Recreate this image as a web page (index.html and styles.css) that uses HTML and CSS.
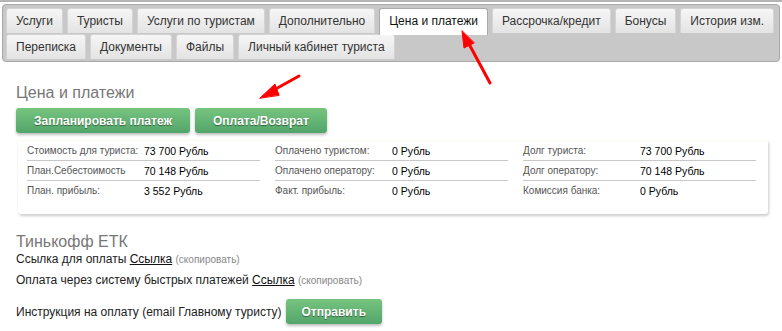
FILE: index.html
```html
<!DOCTYPE html>
<html lang="ru">
<head>
  <meta charset="UTF-8">
  <title>Цена и платежи</title>
  <link rel="stylesheet" href="styles.css">
</head>
<body>

<!-- вкладки заявки -->
<div class="tabs">
  <div class="tab-row">
    <a class="tab">Услуги</a>
    <a class="tab">Туристы</a>
    <a class="tab">Услуги по туристам</a>
    <a class="tab">Дополнительно</a>
    <a class="tab active">Цена и платежи</a>
    <a class="tab">Рассрочка/кредит</a>
    <a class="tab">Бонусы</a>
    <a class="tab">История изм.</a>
  </div>
  <div class="tab-row">
    <a class="tab">Переписка</a>
    <a class="tab">Документы</a>
    <a class="tab">Файлы</a>
    <a class="tab">Личный кабинет туриста</a>
  </div>
</div>

<div class="content">
  <h2>Цена и платежи</h2>
  <div class="btns">
    <button class="green">Запланировать платеж</button>
    <button class="green">Оплата/Возврат</button>
  </div>

  <div class="summary">
    <table>
      <tr><td class="lbl">Стоимость для туриста:</td><td>73 700 Рубль</td></tr>
      <tr><td class="lbl">План.Себестоимость</td><td>70 148 Рубль</td></tr>
      <tr><td class="lbl">План. прибыль:</td><td>3 552 Рубль</td></tr>
    </table>
    <table>
      <tr><td class="lbl">Оплачено туристом:</td><td>0 Рубль</td></tr>
      <tr><td class="lbl">Оплачено оператору:</td><td>0 Рубль</td></tr>
      <tr><td class="lbl">Факт. прибыль:</td><td>0 Рубль</td></tr>
    </table>
    <table>
      <tr><td class="lbl">Долг туриста:</td><td>73 700 Рубль</td></tr>
      <tr><td class="lbl">Долг оператору:</td><td>70 148 Рубль</td></tr>
      <tr><td class="lbl">Комиссия банка:</td><td>0 Рубль</td></tr>
    </table>
  </div>

  <h2 class="bank">Тинькофф ЕТК</h2>
  <p class="line">Ссылка для оплаты <a href="#">Ссылка</a> <span class="copy">(скопировать)</span></p>
  <p class="line">Оплата через систему быстрых платежей <a href="#">Ссылка</a> <span class="copy">(скопировать)</span></p>
  <p class="line send">Инструкция на оплату (email Главному туристу) <button class="green">Отправить</button></p>
</div>

<!-- пометки-стрелки поверх скриншота -->
<svg class="marks" width="782" height="331" viewBox="0 0 782 331">
  <g stroke="#f00" stroke-width="3" stroke-linecap="round" fill="#f00">
    <line x1="490" y1="83" x2="469" y2="44"/>
    <polygon points="462,31 464,48 474,43" stroke-width="1"/>
    <line x1="299" y1="76" x2="272" y2="91"/>
    <polygon points="260,98 275,84 279,95" stroke-width="1"/>
  </g>
</svg>

</body>
</html>
```

FILE: styles.css
```css
body{margin:0;font-family:"Liberation Sans",Arial,sans-serif;font-size:12px;color:#222;border-top:2px solid #b4b4b4;position:relative;height:329px;overflow:hidden}
.tabs{margin:2px 2px 0;padding:3px 3px 1px;background:#c8c8c8;border:1px solid #a8a8a8;border-radius:4px;height:52px}
.tab-row{display:flex;gap:4px;margin-bottom:1px}
.tab{display:block;height:24px;line-height:25px;padding:0 9px;background:linear-gradient(#f6f6f6,#e3e3e3);border:1px solid #d4d4d4;border-bottom:0;border-radius:3px 3px 0 0;color:#333;white-space:nowrap}
.tab.active{background:#fff;border-color:#aaa;height:26px;margin-bottom:-2px;position:relative;color:#111}
.content{padding:0 16px}
h2{margin:22px 0 6px;font-weight:normal;font-size:16px;color:#777}
.btns{display:flex;gap:5px}
button.green{height:25px;padding:0 18px;border:0;border-radius:3px;background:linear-gradient(#77c47f,#52a56a);color:#fff;font-family:inherit;font-weight:bold;font-size:12px;text-shadow:0 1px 1px rgba(0,0,0,.45);box-shadow:0 2px 3px rgba(0,0,0,.25)}
.summary{display:flex;gap:15px;margin:7px -2px 0 2px;padding:0 9px 14px 9px;background:#fff;border-top:1px solid #fbfbee;box-shadow:1px 2px 3px rgba(0,0,0,.2);border-radius:0 0 3px 3px}
.summary table{border-collapse:collapse;table-layout:fixed;width:233px;flex:none;font-size:10.5px}
.summary td{height:19px;padding:0;border-bottom:1px solid #c8c8c8;color:#000;white-space:nowrap}
.summary tr:last-child td{border-bottom:0}
.summary td.lbl{width:117px;color:#555;font-size:10px}
h2.bank{margin:19px 0 1px}
.line{margin:0 0 7px;font-size:12px}
.line a{color:#111}
.copy{font-size:10px;color:#888}
.send{display:flex;align-items:center;gap:4px;margin-top:12px}
.send button.green{padding:0 16px}
.marks{position:absolute;left:0;top:-2px;pointer-events:none}
```
